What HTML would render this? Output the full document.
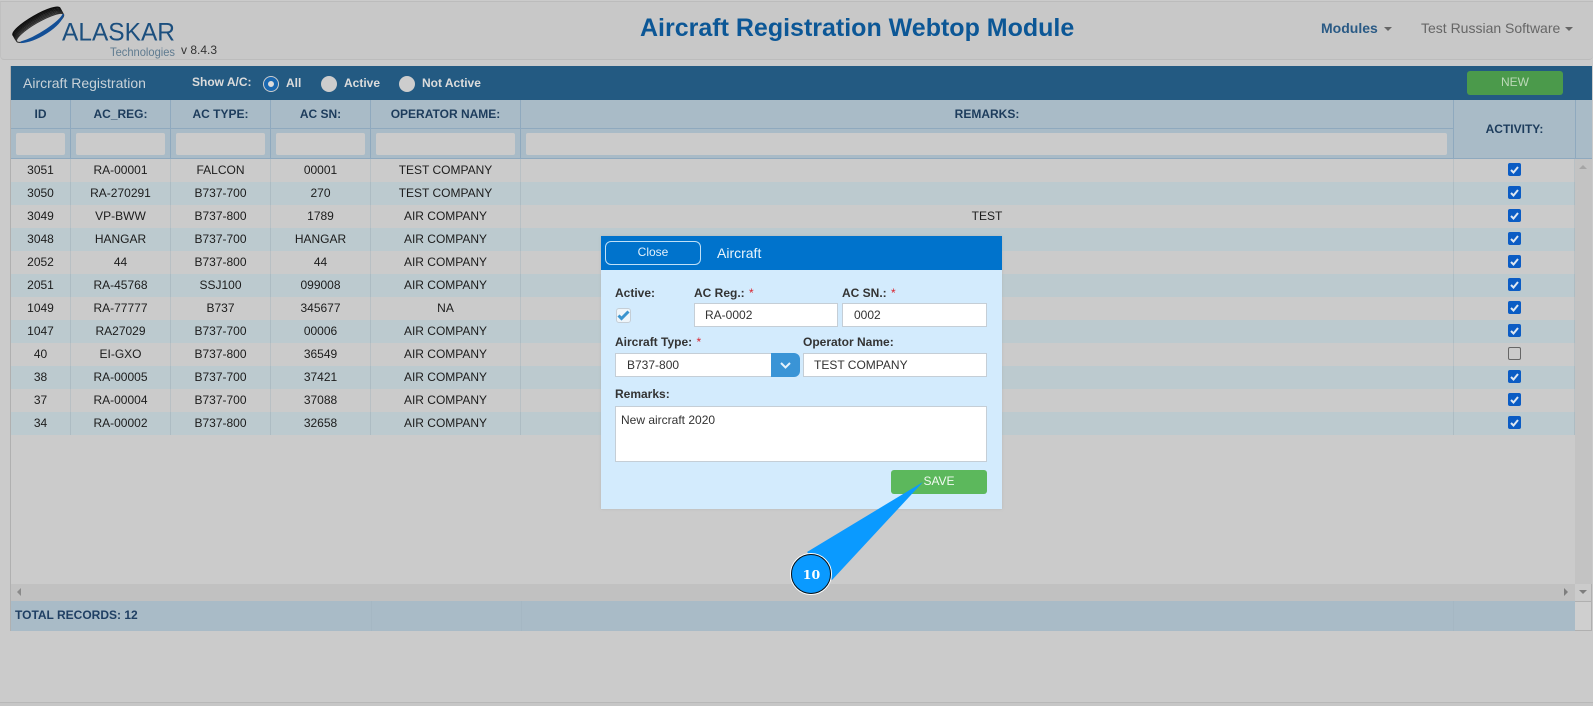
<!DOCTYPE html>
<html><head><meta charset="utf-8"><style>
*{box-sizing:border-box}
html,body{margin:0;padding:0;width:1593px;height:706px;overflow:hidden;background:#cbcbcb;font-family:"Liberation Sans",sans-serif}
.a{position:absolute}
#nav{left:0;top:1px;width:1593px;height:59px;background:#c8c8c8;border:1px solid #bcbcbc;border-left-color:#c0c0c0;border-radius:0 0 4px 4px;border-right:0}
.th{position:absolute;top:100px;height:29px;line-height:29px;text-align:center;font-size:12px;font-weight:bold;color:#1d3c5c;background:#a9bbc7;border-right:1px solid #8fa9be;border-bottom:1px solid #8fa9be}
.fc{position:absolute;top:129px;height:30px;background:#a9bbc7;border-right:1px solid #8fa9be;border-bottom:1px solid #8fa9be}
.fc i{position:absolute;top:4px;height:22px;background:#cbcbcb;border-radius:2px}
.r{position:absolute;left:11px;width:1564px;height:23px;font-size:12px;line-height:23px;color:#1c1c1c;background:#cbcbcb}
.r.e{background:#bccacf}
.r span{position:absolute;top:0;height:23px;text-align:center;border-right:1px solid #b9c0c4}
.r.e span{border-right-color:#adbcc3}
.c1{left:0;width:60px}.c2{left:60px;width:100px}.c3{left:160px;width:100px}.c4{left:260px;width:100px}.c5{left:360px;width:150px}.c6{left:510px;width:933px}.c7{left:1443px;width:121px}
.r b{position:absolute;left:1497px;top:4px;width:13px;height:13px;border-radius:2px;background:#0b5cc4}
.r b svg{display:block}
.r b.off{background:#cbcbcb;border:1px solid #666}
.rad{position:absolute;top:75px;width:16px;height:16px;border-radius:50%;background:#cdcdcd}
.w{position:absolute;font-size:12px;font-weight:bold;color:#dcdcdc;line-height:14px}
.l{position:absolute;font-size:12px;font-weight:bold;color:#333;line-height:14px;white-space:nowrap}
.l em{color:#d9232e;font-style:normal;font-weight:normal;margin-left:1px}
.in{position:absolute;background:#fff;border:1px solid #c5ced6;font-size:12px;color:#333;line-height:22px;height:24px}
</style></head><body>
<div class="a" id="nav"></div>

<svg class="a" style="left:0;top:0" width="240" height="62" viewBox="0 0 240 62">
<g fill="none" transform="translate(1 1) rotate(-30 38 25)">
<ellipse cx="38" cy="20" rx="27" ry="6" stroke="#0d0d0d" stroke-width="1.4"/>
<ellipse cx="38" cy="21.2" rx="27" ry="6" stroke="#111" stroke-width="1.3"/>
<ellipse cx="38" cy="22.4" rx="27" ry="6" stroke="#161616" stroke-width="1.3"/>
<ellipse cx="38" cy="23.6" rx="27" ry="6" stroke="#1c1c1c" stroke-width="1.3"/>
<ellipse cx="38" cy="24.8" rx="27" ry="6" stroke="#242424" stroke-width="1.3"/>
<ellipse cx="38" cy="26" rx="27" ry="6" stroke="#2c2c2c" stroke-width="1.2"/>
<ellipse cx="38" cy="27.2" rx="27" ry="6" fill="#c8c8c8" stroke="#333" stroke-width="1.1"/>
<path d="M14 30C28 37 56 36 65 27C58 32 30 34 14 30Z" fill="#134f96" stroke="#134f96" stroke-width="1.6"/>
</g>
<text x="62" y="40.5" font-family="Liberation Sans" font-size="25" fill="#1c4f7e" textLength="113" lengthAdjust="spacingAndGlyphs">ALASKAR</text>
<text x="110" y="56" font-family="Liberation Sans" font-size="12" fill="#5f7b90" textLength="65" lengthAdjust="spacingAndGlyphs">Technologies</text>
<text x="181" y="54" font-family="Liberation Sans" font-size="12" fill="#333" textLength="36">v 8.4.3</text>
</svg>

<div class="a" style="left:640px;top:13px;font-size:25px;line-height:30px;font-weight:bold;color:#0c5796;white-space:nowrap">Aircraft Registration Webtop Module</div>
<div class="a" style="left:1321px;top:20px;font-size:14px;line-height:16px;font-weight:bold;color:#2a5a85">Modules</div>
<div class="a" style="left:1384px;top:27px;width:0;height:0;border:4px solid transparent;border-top-color:#666;border-bottom:0"></div>
<div class="a" style="left:1421px;top:20px;font-size:14px;line-height:16px;color:#666">Test Russian Software</div>
<div class="a" style="left:1565px;top:27px;width:0;height:0;border:4px solid transparent;border-top-color:#666;border-bottom:0"></div>

<!-- table frame -->
<div class="a" style="left:10px;top:66px;width:1582px;height:565px;border:1px solid #b0b0b0;border-top:0;background:#cbcbcb"></div>
<div class="a" style="left:11px;top:66px;width:1581px;height:34px;background:#235a82"></div>
<div class="a" style="left:23px;top:75px;font-size:14px;line-height:17px;color:#c9d2d8">Aircraft Registration</div>
<div class="w" style="left:192px;top:75px">Show A/C:</div>
<div class="a" style="left:263px;top:76px;width:16px;height:16px;border-radius:50%;background:#cdcdcd"></div>
<div class="a" style="left:264px;top:77px;width:14px;height:14px;border-radius:50%;border:4px solid #1a68b0;background:#dcdcdc"></div>
<div class="w" style="left:286px;top:76px">All</div>
<div class="rad" style="left:321px;top:76px"></div>
<div class="w" style="left:344px;top:76px">Active</div>
<div class="rad" style="left:399px;top:76px"></div>
<div class="w" style="left:422px;top:76px">Not Active</div>
<div class="a" style="left:1467px;top:71px;width:96px;height:24px;border-radius:3px;background:#4b9a4b;color:#bcd9b8;font-size:12px;line-height:23px;text-align:center">NEW</div>

<div class="th" style="left:11px;width:60px">ID</div>
<div class="th" style="left:71px;width:100px">AC_REG:</div>
<div class="th" style="left:171px;width:100px">AC TYPE:</div>
<div class="th" style="left:271px;width:100px">AC SN:</div>
<div class="th" style="left:371px;width:150px">OPERATOR NAME:</div>
<div class="th" style="left:521px;width:933px">REMARKS:</div>
<div class="th" style="left:1454px;width:122px;height:59px;line-height:58px">ACTIVITY:</div>
<div class="a" style="left:1576px;top:100px;width:16px;height:59px;background:#a9bbc7;border-bottom:1px solid #8fa9be"></div>
<div class="fc" style="left:11px;width:60px"><i style="left:5px;width:49px"></i></div>
<div class="fc" style="left:71px;width:100px"><i style="left:5px;width:89px"></i></div>
<div class="fc" style="left:171px;width:100px"><i style="left:5px;width:89px"></i></div>
<div class="fc" style="left:271px;width:100px"><i style="left:5px;width:89px"></i></div>
<div class="fc" style="left:371px;width:150px"><i style="left:5px;width:139px"></i></div>
<div class="fc" style="left:521px;width:933px"><i style="left:5px;width:921px"></i></div>

<div class="r" style="top:159px"><span class="c1">3051</span><span class="c2">RA-00001</span><span class="c3">FALCON</span><span class="c4">00001</span><span class="c5">TEST COMPANY</span><span class="c6"></span><span class="c7"></span><b><svg width="13" height="13" viewBox="0 0 13 13"><path d="M3 7l2.5 2.5L10 4" fill="none" stroke="#dfe8f2" stroke-width="2"/></svg></b></div>
<div class="r e" style="top:182px"><span class="c1">3050</span><span class="c2">RA-270291</span><span class="c3">B737-700</span><span class="c4">270</span><span class="c5">TEST COMPANY</span><span class="c6"></span><span class="c7"></span><b><svg width="13" height="13" viewBox="0 0 13 13"><path d="M3 7l2.5 2.5L10 4" fill="none" stroke="#dfe8f2" stroke-width="2"/></svg></b></div>
<div class="r" style="top:205px"><span class="c1">3049</span><span class="c2">VP-BWW</span><span class="c3">B737-800</span><span class="c4">1789</span><span class="c5">AIR COMPANY</span><span class="c6">TEST</span><span class="c7"></span><b><svg width="13" height="13" viewBox="0 0 13 13"><path d="M3 7l2.5 2.5L10 4" fill="none" stroke="#dfe8f2" stroke-width="2"/></svg></b></div>
<div class="r e" style="top:228px"><span class="c1">3048</span><span class="c2">HANGAR</span><span class="c3">B737-700</span><span class="c4">HANGAR</span><span class="c5">AIR COMPANY</span><span class="c6"></span><span class="c7"></span><b><svg width="13" height="13" viewBox="0 0 13 13"><path d="M3 7l2.5 2.5L10 4" fill="none" stroke="#dfe8f2" stroke-width="2"/></svg></b></div>
<div class="r" style="top:251px"><span class="c1">2052</span><span class="c2">44</span><span class="c3">B737-800</span><span class="c4">44</span><span class="c5">AIR COMPANY</span><span class="c6"></span><span class="c7"></span><b><svg width="13" height="13" viewBox="0 0 13 13"><path d="M3 7l2.5 2.5L10 4" fill="none" stroke="#dfe8f2" stroke-width="2"/></svg></b></div>
<div class="r e" style="top:274px"><span class="c1">2051</span><span class="c2">RA-45768</span><span class="c3">SSJ100</span><span class="c4">099008</span><span class="c5">AIR COMPANY</span><span class="c6"></span><span class="c7"></span><b><svg width="13" height="13" viewBox="0 0 13 13"><path d="M3 7l2.5 2.5L10 4" fill="none" stroke="#dfe8f2" stroke-width="2"/></svg></b></div>
<div class="r" style="top:297px"><span class="c1">1049</span><span class="c2">RA-77777</span><span class="c3">B737</span><span class="c4">345677</span><span class="c5">NA</span><span class="c6"></span><span class="c7"></span><b><svg width="13" height="13" viewBox="0 0 13 13"><path d="M3 7l2.5 2.5L10 4" fill="none" stroke="#dfe8f2" stroke-width="2"/></svg></b></div>
<div class="r e" style="top:320px"><span class="c1">1047</span><span class="c2">RA27029</span><span class="c3">B737-700</span><span class="c4">00006</span><span class="c5">AIR COMPANY</span><span class="c6"></span><span class="c7"></span><b><svg width="13" height="13" viewBox="0 0 13 13"><path d="M3 7l2.5 2.5L10 4" fill="none" stroke="#dfe8f2" stroke-width="2"/></svg></b></div>
<div class="r" style="top:343px"><span class="c1">40</span><span class="c2">EI-GXO</span><span class="c3">B737-800</span><span class="c4">36549</span><span class="c5">AIR COMPANY</span><span class="c6"></span><span class="c7"></span><b class="off"></b></div>
<div class="r e" style="top:366px"><span class="c1">38</span><span class="c2">RA-00005</span><span class="c3">B737-700</span><span class="c4">37421</span><span class="c5">AIR COMPANY</span><span class="c6"></span><span class="c7"></span><b><svg width="13" height="13" viewBox="0 0 13 13"><path d="M3 7l2.5 2.5L10 4" fill="none" stroke="#dfe8f2" stroke-width="2"/></svg></b></div>
<div class="r" style="top:389px"><span class="c1">37</span><span class="c2">RA-00004</span><span class="c3">B737-700</span><span class="c4">37088</span><span class="c5">AIR COMPANY</span><span class="c6"></span><span class="c7"></span><b><svg width="13" height="13" viewBox="0 0 13 13"><path d="M3 7l2.5 2.5L10 4" fill="none" stroke="#dfe8f2" stroke-width="2"/></svg></b></div>
<div class="r e" style="top:412px"><span class="c1">34</span><span class="c2">RA-00002</span><span class="c3">B737-800</span><span class="c4">32658</span><span class="c5">AIR COMPANY</span><span class="c6"></span><span class="c7"></span><b><svg width="13" height="13" viewBox="0 0 13 13"><path d="M3 7l2.5 2.5L10 4" fill="none" stroke="#dfe8f2" stroke-width="2"/></svg></b></div>

<!-- scrollbars -->
<div class="a" style="left:1575px;top:159px;width:17px;height:425px;background:#c3c3c3"></div>
<div class="a" style="left:1579px;top:165px;width:0;height:0;border:4px solid transparent;border-bottom-color:#a5a5a5;border-top:0"></div>
<div class="a" style="left:1579px;top:590px;width:0;height:0;border:4px solid transparent;border-top-color:#7e7e7e;border-bottom:0"></div>
<div class="a" style="left:11px;top:584px;width:1564px;height:17px;background:#c1c1c1"></div>
<div class="a" style="left:17px;top:588px;width:0;height:0;border:4px solid transparent;border-right-color:#8a8a8a;border-left:0"></div>
<div class="a" style="left:1564px;top:588px;width:0;height:0;border:4px solid transparent;border-left-color:#7e7e7e;border-right:0"></div>

<!-- footer -->
<div class="a" style="left:11px;top:601px;width:1564px;height:30px;background:#a9bbc7"></div>
<div class="a" style="left:371px;top:601px;width:1px;height:30px;background:#a5b7c3"></div>
<div class="a" style="left:521px;top:601px;width:1px;height:30px;background:#a5b7c3"></div>
<div class="a" style="left:1453px;top:601px;width:1px;height:30px;background:#a5b7c3"></div>
<div class="a" style="left:15px;top:608px;font-size:12px;line-height:15px;font-weight:bold;color:#1f3f63">TOTAL RECORDS: 12</div>
<div class="a" style="left:1575px;top:601px;width:17px;height:30px;background:#cfcfcf;border:1px solid #b0b0b0;border-left:0"></div>
<div class="a" style="left:0;top:702px;width:1593px;height:1px;background:#b8b8b8"></div>
<div class="a" style="left:0;top:703px;width:1593px;height:3px;background:#c6c6c6"></div>

<!-- modal -->
<div class="a" style="left:601px;top:236px;width:401px;height:273px;background:#d3ebfd;box-shadow:0 0 2px rgba(170,170,170,.6)"></div>
<div class="a" style="left:601px;top:236px;width:401px;height:34px;background:#0073cc"></div>
<div class="a" style="left:605px;top:241px;width:96px;height:24px;border:1px solid #bfe0f7;border-radius:6px;color:#e2f0fb;font-size:12px;line-height:20px;text-align:center">Close</div>
<div class="a" style="left:717px;top:245px;font-size:14px;line-height:17px;color:#e8f4fc">Aircraft</div>
<div class="l" style="left:615px;top:286px">Active:</div>
<div class="l" style="left:694px;top:286px">AC Reg.: <em>*</em></div>
<div class="l" style="left:842px;top:286px">AC SN.: <em>*</em></div>
<div class="a" style="left:616px;top:308px;width:15px;height:15px;background:#eef5fa;border:1px solid #c5ced6;border-radius:3px"></div>
<svg class="a" style="left:615px;top:307px" width="16" height="16" viewBox="0 0 16 16"><path d="M3.5 8.5l3 3L13.5 4.5" fill="none" stroke="#3a94cf" stroke-width="3"/></svg>
<div class="in" style="left:694px;top:303px;width:144px;padding-left:10px">RA-0002</div>
<div class="in" style="left:842px;top:303px;width:145px;padding-left:11px">0002</div>
<div class="l" style="left:615px;top:335px">Aircraft Type: <em>*</em></div>
<div class="l" style="left:803px;top:335px">Operator Name:</div>
<div class="in" style="left:615px;top:353px;width:160px;padding-left:11px">B737-800</div>
<div class="a" style="left:771px;top:353px;width:29px;height:24px;background:#3a94d6;border-radius:0 6px 6px 0"></div>
<svg class="a" style="left:771px;top:353px" width="29" height="24" viewBox="0 0 29 24"><path d="M10 10l4.5 4.5L19 10" fill="none" stroke="#e6f2fb" stroke-width="2"/></svg>
<div class="in" style="left:803px;top:353px;width:184px;padding-left:10px">TEST COMPANY</div>
<div class="l" style="left:615px;top:387px">Remarks:</div>
<div class="in" style="left:615px;top:406px;width:372px;height:56px;padding:4px 0 0 5px;line-height:18px">New aircraft 2020</div>
<div class="a" style="left:891px;top:470px;width:96px;height:24px;border-radius:3px;background:#5cb85c;color:#f2faf2;font-size:12px;line-height:23px;text-align:center">SAVE</div>

<!-- callout -->
<svg class="a" style="left:0;top:0" width="1593" height="706" viewBox="0 0 1593 706">
<path d="M807 552L923 482L832 580Z" fill="#0a9aff"/>
<circle cx="811" cy="574" r="20.5" fill="#0a9aff" stroke="#fff" stroke-width="1"/>
<circle cx="811" cy="574" r="19.5" fill="#0a9aff" stroke="#111" stroke-width="1"/>
<text x="811.5" y="579" text-anchor="middle" font-family="DejaVu Serif" font-weight="bold" font-size="12.5" fill="#fff">10</text>
</svg>
</body></html>
